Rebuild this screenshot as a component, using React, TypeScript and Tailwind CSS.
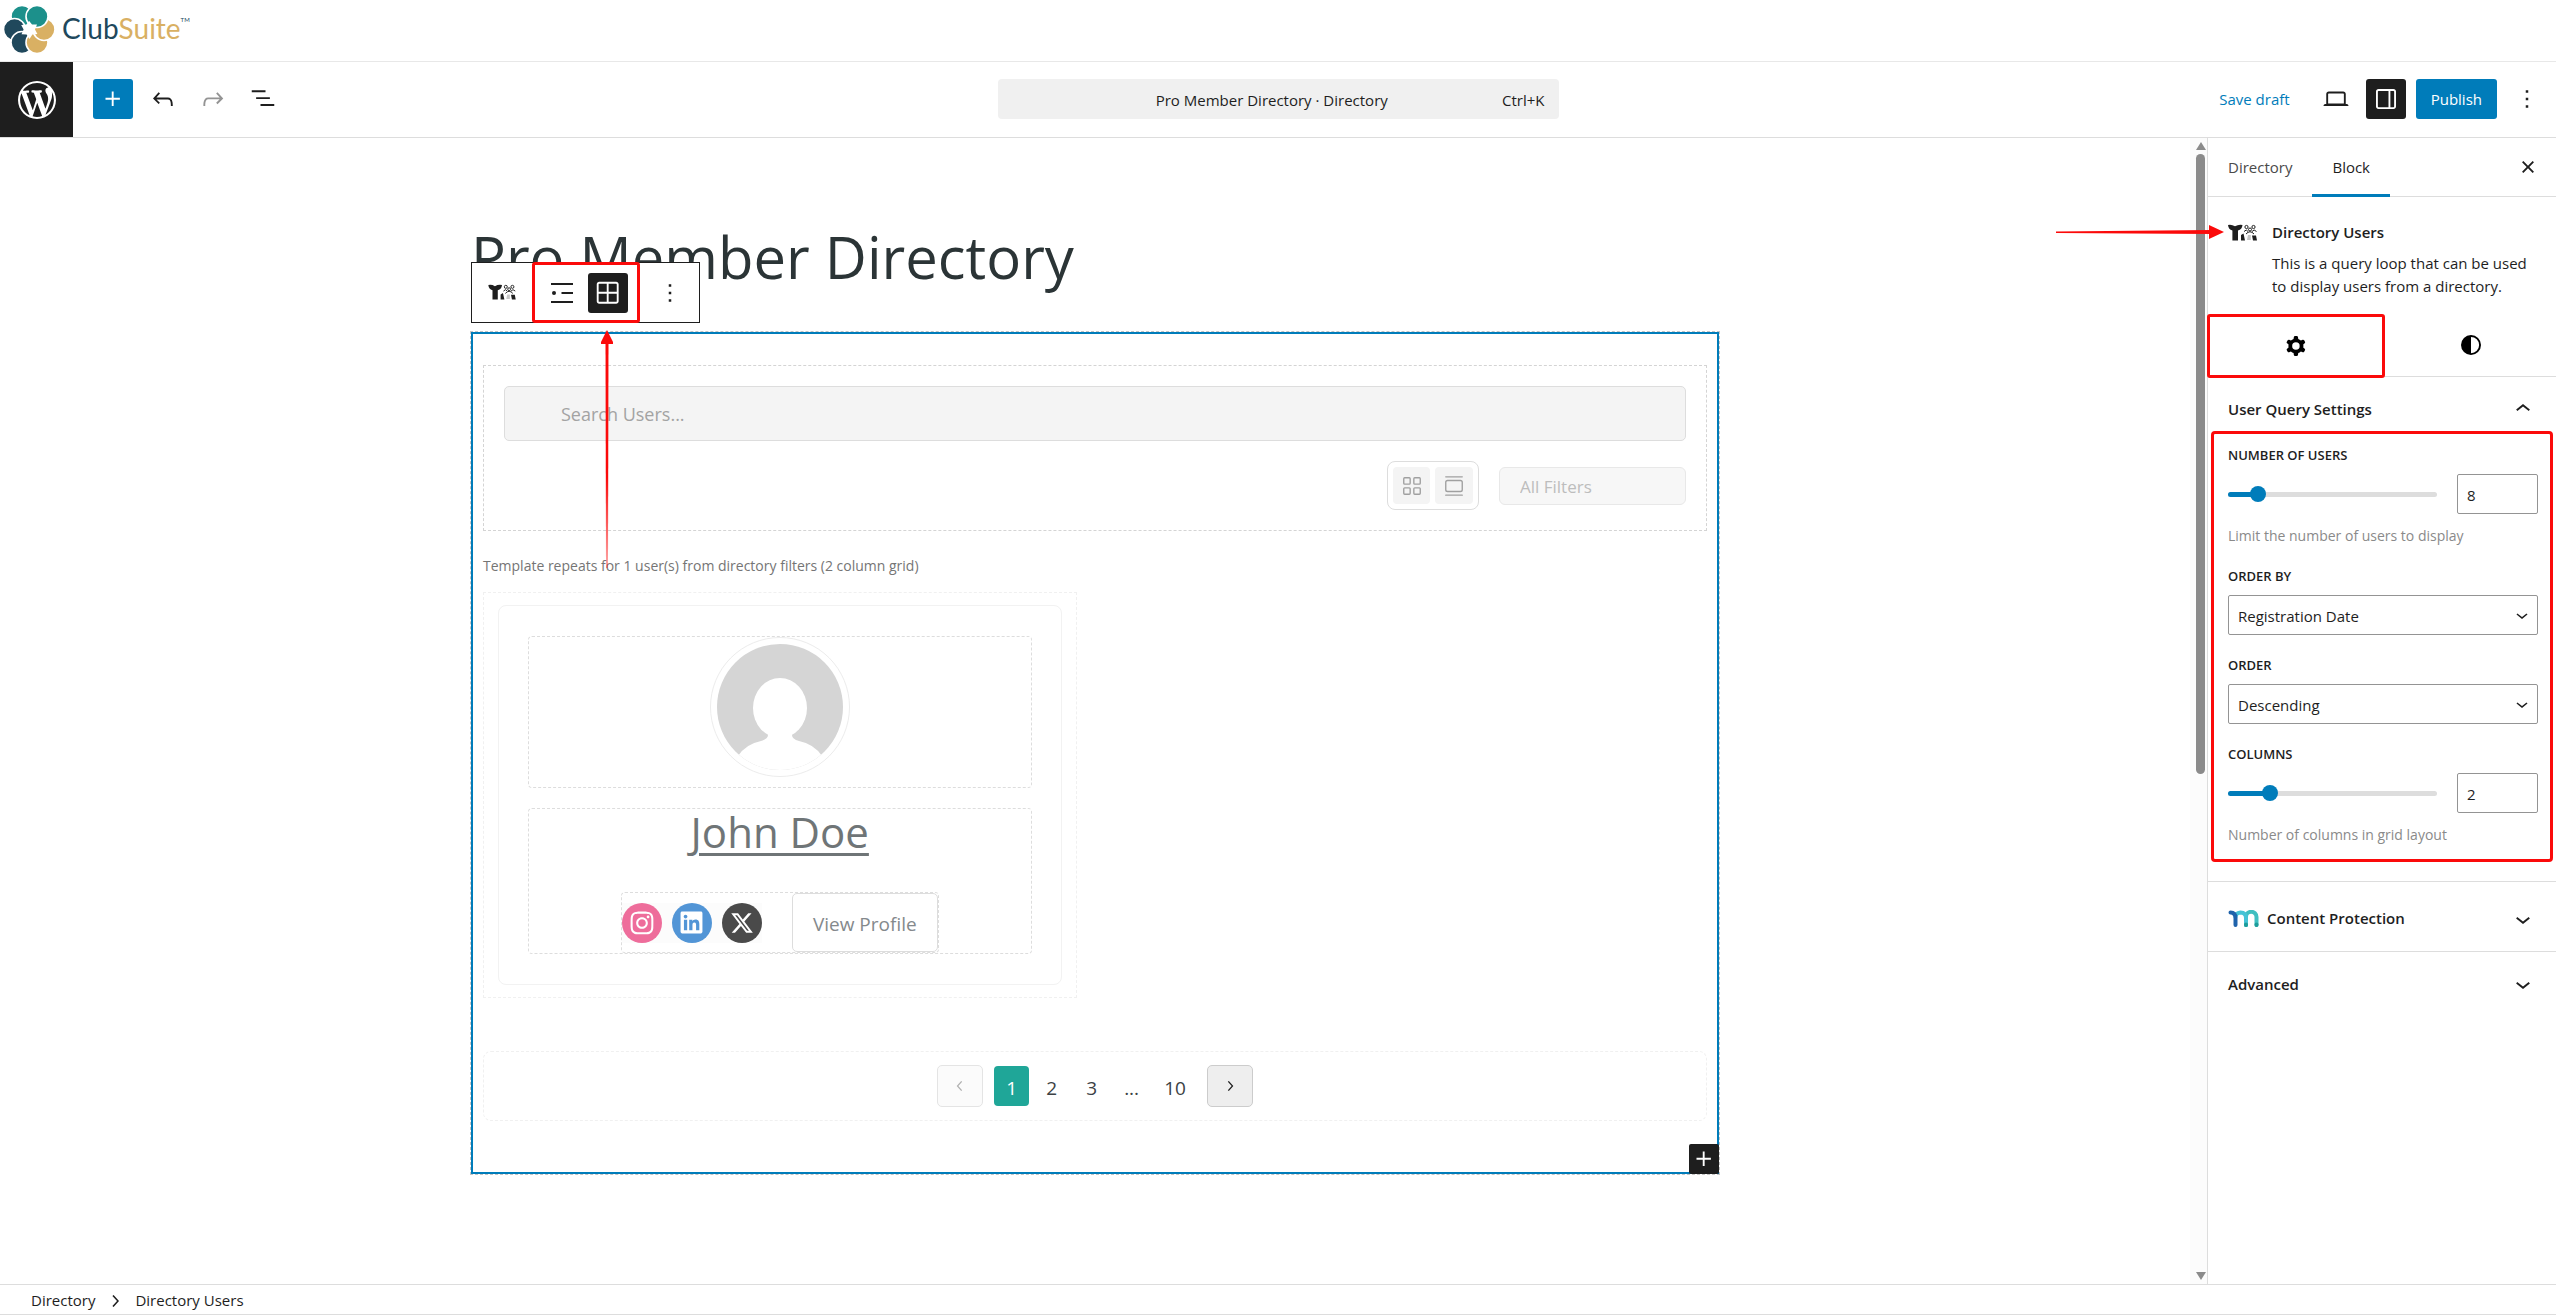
import { useState, type ReactNode } from "react";
import { FaInstagram, FaLinkedin } from "react-icons/fa";
import { FaXTwitter } from "react-icons/fa6";
import { GalleryVertical, LayoutGrid } from "lucide-react";

const paths = {
  plus: "M11 12.5V17.5H12.5V12.5H17.5V11H12.5V6H11V11H6V12.5H11Z",
  undo: "M18.3 11.7c-.6-.6-1.4-.9-2.3-.9H6.7l2.9-3.3-1.1-1-4.5 5L8.5 16l1-1-2.7-2.7H16c.5 0 .9.2 1.3.5 1 1 1 3.4 1 4.5v.3h1.5v-.2c0-1.5 0-4.3-1.5-5.7z",
  redo: "M15.6 6.5l-1.1 1 2.9 3.3H8c-.9 0-1.7.3-2.3.9-1.4 1.5-1.4 4.2-1.4 5.6v.2h1.5v-.3c0-1.1 0-3.5 1-4.5.3-.3.7-.5 1.3-.5h9.2L14.5 15l1.1 1.1 4.6-4.6-4.6-5z",
  outline: "M3 5h11v1.5H3V5Zm3.5 5.5h11V12h-11v-1.5ZM21 16H10v1.5h11V16Z",
  laptop: "M20.5 16h-.7V8c0-1.1-.9-2-2-2H6.2c-1.1 0-2 .9-2 2v8h-.7c-.8 0-1.5.7-1.5 1.5h20c0-.8-.7-1.5-1.5-1.5zM5.7 8c0-.3.2-.5.5-.5h11.6c.3 0 .5.2.5.5v7.6H5.7V8z",
  drawer: "M18 4H6c-1.1 0-2 .9-2 2v12c0 1.1.9 2 2 2h12c1.1 0 2-.9 2-2V6c0-1.1-.9-2-2-2zm-4 14.5H6c-.3 0-.5-.2-.5-.5V6c0-.3.2-.5.5-.5h8v13zm4.5-.5c0 .3-.2.5-.5.5h-2.5v-13H18c.3 0 .5.2.5.5v12z",
  more: "M13 19h-2v-2h2v2zm0-6h-2v-2h2v2zm0-6h-2V5h2v2z",
  close: "M12 13.06l3.712 3.713 1.061-1.06L13.061 12l3.712-3.712-1.06-1.06L12 10.938 8.288 7.227l-1.061 1.06L10.939 12l-3.712 3.712 1.06 1.061L12 13.061z",
  cog: "M10.289 4.836A1 1 0 0111.275 4h1.306a1 1 0 01.987.836l.244 1.466c.787.26 1.503.679 2.108 1.218l1.393-.522a1 1 0 011.216.437l.653 1.13a1 1 0 01-.23 1.273l-1.148.944a6.025 6.025 0 010 2.435l1.149.946a1 1 0 01.23 1.272l-.653 1.13a1 1 0 01-1.216.437l-1.394-.522c-.605.54-1.32.958-2.108 1.218l-.244 1.466a1 1 0 01-.987.836h-1.306a1 1 0 01-.986-.836l-.244-1.466a5.995 5.995 0 01-2.108-1.218l-1.394.522a1 1 0 01-1.217-.436l-.653-1.131a1 1 0 01.23-1.272l1.149-.946a6.026 6.026 0 010-2.435l-1.148-.944a1 1 0 01-.23-1.272l.653-1.131a1 1 0 011.217-.437l1.393.522a5.994 5.994 0 012.108-1.218l.244-1.466zM14.929 12a3 3 0 11-6 0 3 3 0 016 0z",
  contrast: "M20 12a8 8 0 1 1-16 0 8 8 0 0 1 16 0Zm-1.5 0a6.5 6.5 0 0 1-6.5 6.5v-13a6.5 6.5 0 0 1 6.5 6.5Z",
  up: "M6.5 12.4L12 8l5.5 4.4-.9 1.2L12 10l-4.5 3.6-1-1.2z",
  down: "M17.5 11.6L12 16l-5.5-4.4.9-1.2L12 14l4.5-3.6 1 1.2z",
  left: "M14.6 7l-1.2-1L8 12l5.4 6 1.2-1-4.6-5z",
  right: "M10.6 6L9.4 7l4.6 5-4.6 5 1.2 1 5.4-6z",
  grid: "m3 5c0-1.10457.89543-2 2-2h13.5c1.1046 0 2 .89543 2 2v13.5c0 1.1046-.8954 2-2 2h-13.5c-1.10457 0-2-.8954-2-2zm2-.5h6v6.5h-6.5v-6c0-.27614.22386-.5.5-.5zm-.5 8v6c0 .2761.22386.5.5.5h6v-6.5zm8 0v6.5h6c.2761 0 .5-.2239.5-.5v-6zm0-8v6.5h6.5v-6c0-.27614-.2239-.5-.5-.5z",
};

function Icon({ name, className = "size-[30px]" }: { name: keyof typeof paths; className?: string }) {
  return (
    <svg viewBox="0 0 24 24" fill="currentColor" className={`shrink-0 ${className}`} aria-hidden="true">
      <path fillRule="evenodd" clipRule="evenodd" d={paths[name]} />
    </svg>
  );
}

function WordPressLogo() {
  return (
    <svg viewBox="0 0 20 20" fill="currentColor" className="size-[38px]" aria-hidden="true">
      <path d="M20 10c0-5.51-4.49-10-10-10C4.48 0 0 4.49 0 10c0 5.52 4.48 10 10 10 5.51 0 10-4.48 10-10zM7.78 15.37L4.37 6.22c.55-.02 1.17-.08 1.17-.08.5-.06.44-1.13-.06-1.11 0 0-1.45.11-2.37.11-.18 0-.37 0-.58-.01C4.12 2.69 6.87 1.11 10 1.11c2.33 0 4.45.87 6.05 2.34-.68-.11-1.65.39-1.65 1.58 0 .74.45 1.36.9 2.1.35.61.55 1.36.55 2.46 0 1.49-1.4 5-1.4 5l-3.03-8.37c.54-.02.82-.17.82-.17.5-.05.44-1.25-.06-1.22 0 0-1.44.12-2.38.12-.87 0-2.33-.12-2.33-.12-.5-.03-.56 1.2-.06 1.22l.92.08 1.26 3.41zM17.41 10c.24-.64.74-1.87.43-4.25.7 1.29 1.05 2.71 1.05 4.25 0 3.29-1.73 6.24-4.4 7.78.97-2.59 1.94-5.2 2.92-7.78zM6.1 18.09C3.12 16.65 1.11 13.53 1.11 10c0-1.3.23-2.48.72-3.59C3.25 10.3 4.67 14.2 6.1 18.09zm4.03-6.63l2.58 6.98c-.86.29-1.76.45-2.71.45-.79 0-1.57-.11-2.29-.33.81-2.38 1.62-4.74 2.42-7.1z" />
    </svg>
  );
}

function ClubLogo() {
  return (
    <svg viewBox="0 0 58 58" className="size-[58px]" aria-hidden="true">
      <g stroke="#fff" strokeWidth="1.6">
        <circle cx="22" cy="16.5" r="11" fill="#1c908b" />
        <circle cx="14.5" cy="29.5" r="11" fill="#20485c" />
        <circle cx="22" cy="42.5" r="11" fill="#20485c" />
        <circle cx="37" cy="42.5" r="11" fill="#d9b063" />
        <circle cx="44" cy="29.5" r="11" fill="#d9b063" />
        <circle cx="37" cy="16.5" r="11" fill="#1c908b" />
      </g>
      <path d="M29.2 21 32 24.6 37 24.6 35 29.5 37.4 34 32.4 34.6 29.5 39 26.6 34.6 21.5 34.2 23.6 29.5 21.2 25 26.4 24.6Z" fill="#fff" />
    </svg>
  );
}

function DirectoryGlyph({ className }: { className: string }) {
  return (
    <svg viewBox="0 0 30 18" className={className} fill="#1e1e1e" aria-hidden="true">
      <path d="M0 1Q3.500 .2 7 2.300Q10.500.2 14.500 1Q14 5.500 10 6.500V16.500H4.400V6.500Q.5 5.500 0 1Z" />
      <path d="M15.500 9.500 13 11V16.500H17ZM24 11.500H28L29 16.500H25Z" />
      <path d="M20 11h2.800v5H19Z" opacity=".25" />
      <g fill="none" stroke="#1e1e1e" strokeWidth="1">
        <circle cx="18.500" cy="3" r="1.600" />
        <circle cx="25.500" cy="3" r="1.600" />
        <circle cx="22" cy="5.500" r="1.500" />
        <path d="M16 7.500q2.500-3 4 0M24 7.500q2-3 4.500 0M18 10q4-4.500 8 0" />
      </g>
    </svg>
  );
}

function MemberGlyph() {
  return (
    <svg viewBox="0 0 31 18" className="h-[18px] w-[31px]" fill="none" strokeLinecap="round" strokeWidth="4" aria-hidden="true">
      <path d="M18 15V7a5 5 0 0 1 10.500 0V15" stroke="#3fbfc0" />
      <path d="M7.500 7q0-4 5-4.500Q18 2.500 18 8V15" stroke="#45c3d6" />
      <path d="M2.500 2.500Q7.500 2.500 7.500 8V15" stroke="#1f63ab" />
      <path d="M18 14.500V15M28.500 14.500V15" stroke="#1f9c9a" />
    </svg>
  );
}

function IconButton({ label, className = "", children }: { label: string; className?: string; children: ReactNode }) {
  return (
    <button type="button" aria-label={label} className={`flex size-10 shrink-0 items-center justify-center rounded-[3px] ${className}`}>
      {children}
    </button>
  );
}

function RangeField({ id, label, help, start, max }: { id: string; label: string; help: string; start: number; max: number }) {
  const [value, setValue] = useState(start);
  return (
    <div>
      <label htmlFor={id} className="block text-[13px] leading-5 font-semibold uppercase">{label}</label>
      <div className="mt-[9px] flex items-center gap-5">
        <div className="relative h-[5px] flex-1 rounded-full bg-[#ddd]">
          <div className="h-full rounded-full bg-[#007cba]" style={{ width: `${((value - 1) / (max - 1)) * 100}%` }} />
          <input
            id={id}
            type="range"
            min={1}
            max={max}
            value={value}
            onChange={(e) => setValue(Number(e.target.value))}
            className="absolute -inset-x-2 inset-y-0 appearance-none bg-transparent [&::-webkit-slider-thumb]:size-4 [&::-webkit-slider-thumb]:appearance-none [&::-webkit-slider-thumb]:rounded-full [&::-webkit-slider-thumb]:bg-[#007cba]"
          />
        </div>
        <input
          type="text"
          inputMode="numeric"
          aria-label={`${label} value`}
          value={value}
          onChange={(e) => setValue(Number(e.target.value) || 1)}
          className="h-10 w-[81px] rounded-[2px] border border-[#949494] px-[9px] pt-0.5 text-[15px]"
        />
      </div>
      <p className="mt-3 text-[14px] leading-5 text-[#8a8a8a]">{help}</p>
    </div>
  );
}

function SelectField({ id, label, options }: { id: string; label: string; options: string[] }) {
  return (
    <div>
      <label htmlFor={id} className="block text-[13px] leading-5 font-semibold uppercase">{label}</label>
      <div className="relative mt-[9px]">
        <select id={id} className="h-10 w-full appearance-none rounded-[2px] border border-[#949494] bg-white px-[9px] pt-0.5 text-[15px]">
          {options.map((o) => <option key={o}>{o}</option>)}
        </select>
        <Icon name="down" className="pointer-events-none absolute top-2 right-1 size-6" />
      </div>
    </div>
  );
}

function TopBar() {
  return (
    <header className="flex h-[76px] shrink-0 border-b border-[#ddd]">
      <a href="#dashboard" aria-label="View posts" className="flex w-[73px] items-center justify-center bg-[#1e1e1e] text-white">
        <WordPressLogo />
      </a>
      <div className="grid flex-1 grid-cols-[1fr_auto_1fr] items-center pr-[9px] pb-0.5 pl-5">
        <div className="flex gap-2.5">
          <IconButton label="Block inserter" className="bg-[#007cba] text-white"><Icon name="plus" /></IconButton>
          <IconButton label="Undo"><Icon name="undo" /></IconButton>
          <IconButton label="Redo" className="text-[#949494]"><Icon name="redo" /></IconButton>
          <IconButton label="Document overview"><Icon name="outline" /></IconButton>
        </div>
        <button type="button" className="mr-[84px] flex h-10 w-[561px] items-center rounded-[4px] bg-[#f0f0f0] pt-1 pr-3.5 pl-11 text-[15px]">
          <span className="flex-1">Pro Member Directory · Directory</span>
          <span>Ctrl+K</span>
        </button>
        <div className="flex items-center justify-end gap-2.5">
          <button type="button" className="mr-4 pt-0.5 text-[15px] text-[#007cba]">Save draft</button>
          <IconButton label="View"><Icon name="laptop" /></IconButton>
          <IconButton label="Settings" className="bg-[#1e1e1e] text-white"><Icon name="drawer" /></IconButton>
          <button type="button" className="h-10 rounded-[3px] bg-[#007cba] px-[15px] pt-0.5 text-[15px] text-white">Publish</button>
          <IconButton label="Options"><Icon name="more" /></IconButton>
        </div>
      </div>
    </header>
  );
}

function BlockToolbar() {
  return (
    <div className="absolute -top-[72px] -left-0.5 flex h-[61px] w-[229px] items-center border border-[#1e1e1e] bg-white">
      <button type="button" aria-label="Directory Users" className="flex h-full w-[60px] items-center justify-center">
        <DirectoryGlyph className="h-[17px] w-[29px]" />
      </button>
      <div className="flex h-[61px] w-[108px] items-center gap-1.5 rounded-[3px] border-[3px] border-[#fb0a0a] pl-[7px]">
        <IconButton label="List view">
          <svg viewBox="0 0 24 24" className="size-6" stroke="currentColor" strokeWidth="2" aria-hidden="true">
            <path d="M1 3h22M11.500 12h11.500M1 21h22" />
            <circle cx="4" cy="12" r="2" fill="currentColor" stroke="none" />
          </svg>
        </IconButton>
        <IconButton label="Grid view" className="bg-[#1e1e1e] text-white"><Icon name="grid" /></IconButton>
      </div>
      <button type="button" aria-label="Options" className="flex h-full flex-1 items-center justify-center"><Icon name="more" /></button>
    </div>
  );
}

function UserCard() {
  return (
    <article className="border border-dashed border-[#f0f0f0] px-3.5 py-3">
      <div className="flex flex-col gap-5 rounded-lg border border-[#f2f2f2] px-[29px] py-[30px]">
        <div className="flex justify-center rounded-[4px] border border-dashed border-[#ddd] pb-2.5">
          <svg viewBox="0 0 140 140" className="size-[140px]" role="img" aria-label="User avatar">
            <defs>
              <clipPath id="avatar"><circle cx="70" cy="70" r="63" /></clipPath>
            </defs>
            <circle cx="70" cy="70" r="69.500" fill="#fff" stroke="#ececec" />
            <g clipPath="url(#avatar)">
              <rect width="140" height="140" fill="#d5d5d5" />
              <ellipse cx="70" cy="71" rx="27" ry="30" fill="#fff" />
              <path d="M58 88V98Q58 102 51 104Q36 107 28 119V140H112V119Q104 107 89 104Q82 102 82 98V88Z" fill="#fff" />
            </g>
          </svg>
        </div>
        <div className="flex flex-col items-center rounded-[4px] border border-dashed border-[#ddd]">
          <a href="#john-doe" className="text-[42px] leading-[46px] text-[#6f7577] underline decoration-[3px] underline-offset-[5px]">John Doe</a>
          <div className="mt-[37px] flex items-center rounded-[4px] border border-dashed border-[#ddd]">
            <div className="mr-[30px] flex gap-2.5 bg-[#fcfcfc]">
              <a href="#instagram" aria-label="Instagram" className="flex size-10 items-center justify-center rounded-full bg-[#ee6d9b] text-white"><FaInstagram className="size-[26px]" /></a>
              <a href="#linkedin" aria-label="LinkedIn" className="flex size-10 items-center justify-center rounded-full bg-[#5295d6] text-white"><FaLinkedin className="size-[25px]" /></a>
              <a href="#x" aria-label="X" className="flex size-10 items-center justify-center rounded-full bg-[#4a4a4a] text-white"><FaXTwitter className="size-6" /></a>
            </div>
            <button type="button" className="h-[59px] w-[146px] rounded-[5px] border border-[#ddd] pt-1 text-[19px] text-[#84898c]">View Profile</button>
          </div>
        </div>
      </div>
    </article>
  );
}

function Pagination() {
  const cell = "flex h-10 min-w-[35px] items-center justify-center rounded-[4px]";
  return (
    <nav aria-label="Pagination" className="mt-[53px] flex items-center justify-center gap-[5px] rounded-[8px] border border-dashed border-[#f0f0f0] py-[13px] text-[19px] text-[#3c4245]">
      <button type="button" aria-label="Previous page" className="mr-1.5 flex h-[42px] w-[46px] items-center justify-center rounded-[5px] border border-[#e4e4e4] bg-[#fbfbfb] text-[#b0b0b0]">
        <Icon name="left" className="size-5" />
      </button>
      <button type="button" aria-current="page" className={`${cell} bg-[#1fa698] pt-1 text-white`}>1</button>
      <button type="button" className={`${cell} pt-1`}>2</button>
      <button type="button" className={`${cell} pt-1`}>3</button>
      <span className={`${cell} pt-1`}>...</span>
      <button type="button" className={`${cell} px-2.5 pt-1`}>10</button>
      <button type="button" aria-label="Next page" className="ml-1.5 flex h-[42px] w-[46px] items-center justify-center rounded-[5px] border border-[#ccc] bg-[#eee] text-[#1e1e1e]">
        <Icon name="right" className="size-5" />
      </button>
    </nav>
  );
}

function Canvas() {
  return (
    <main className="min-w-0 flex-1 pt-[79px]">
      <div className="mx-auto max-w-[1248px]">
        <h1 className="text-[58px] leading-[80px] text-[#2b3436]">Pro Member Directory</h1>
        <section className="relative mt-[35px] border-2 border-[#007cba] px-2.5 pt-[31px] pb-[51px] outline-1 outline-dashed outline-[#c4c4c4]">
          <BlockToolbar />
          <div className="border border-dashed border-[#d4d4d4] p-5">
            <input
              type="search"
              aria-label="Search users"
              placeholder="Search Users..."
              className="block h-[55px] w-full rounded-[5px] border border-[#ddd] bg-[#f4f4f4] px-14 text-[18px] placeholder:text-[#a3a3a3]"
            />
            <div className="mt-5 flex items-center justify-end gap-5">
              <div className="flex gap-[5px] rounded-[8px] border border-[#ddd] p-[5px] text-[#a0a0a0]">
                <button type="button" aria-label="Grid layout" className="flex size-[37px] items-center justify-center rounded-[4px] bg-[#f4f4f4]"><LayoutGrid className="size-[22px]" strokeWidth={1.5} /></button>
                <button type="button" aria-label="List layout" className="flex h-[37px] w-[38px] items-center justify-center rounded-[4px] bg-[#f4f4f4]"><GalleryVertical className="size-[22px]" strokeWidth={1.5} /></button>
              </div>
              <input
                type="text"
                aria-label="All filters"
                placeholder="All Filters"
                className="h-[38px] w-[187px] rounded-[6px] border border-[#e8e8e8] bg-[#f7f7f7] px-5 pt-0.5 text-[17px] placeholder:text-[#bdbdbd]"
              />
            </div>
          </div>
          <p className="mt-[25px] text-[14px] leading-5 text-[#757575]">Template repeats for 1 user(s) from directory filters (2 column grid)</p>
          <div className="mt-4 grid grid-cols-2 gap-[37px]">
            <UserCard />
          </div>
          <Pagination />
          <button type="button" aria-label="Add block" className="absolute -right-0.5 -bottom-0.5 flex size-[30px] items-center justify-center rounded-[2px] bg-[#1e1e1e] text-white">
            <Icon name="plus" />
          </button>
          <svg viewBox="0 0 12 238" className="pointer-events-none absolute -top-1 left-32 h-[238px] w-3" aria-hidden="true">
            <defs>
              <linearGradient id="fade-up" x1="0" y1="0" x2="0" y2="1">
                <stop offset=".6" stopColor="#fb0a0a" />
                <stop offset="1" stopColor="#fb0a0a" stopOpacity=".35" />
              </linearGradient>
            </defs>
            <path d="M4.500 10H7.500L7 238H5Z" fill="url(#fade-up)" />
            <path d="M6 0 13 14H-1Z" fill="#fb0a0a" />
          </svg>
        </section>
      </div>
    </main>
  );
}

function ScrollTrack() {
  return (
    <div className="flex w-[17px] flex-col items-center bg-[#fcfcfc] py-1 pl-1 text-[#8b8b8b]" aria-hidden="true">
      <svg viewBox="0 0 10 8" className="h-2 w-[10px]" fill="currentColor"><path d="M5 0 10 8H0Z" /></svg>
      <div className="mt-1 mb-auto h-[620px] w-[9px] rounded-full bg-current" />
      <svg viewBox="0 0 10 8" className="h-2 w-[10px]" fill="currentColor"><path d="M5 8 10 0H0Z" /></svg>
    </div>
  );
}

function Sidebar() {
  return (
    <aside className="relative w-[349px] shrink-0 border-l border-[#ddd] text-[15px]">
      <svg viewBox="0 0 170 14" className="pointer-events-none absolute top-[87px] -left-[152px] h-[14px] w-[170px]" aria-hidden="true">
        <path d="M0 6.500 155 5V9L0 8Z" fill="#fb0a0a" />
        <path d="M153 0 168 7 153 14Z" fill="#fb0a0a" />
      </svg>
      <div className="flex h-[59px] border-b border-[#ddd]">
        <button type="button" className="px-5 text-[#4a4a4a]">Directory</button>
        <button type="button" className="-mb-px border-b-[3px] border-[#007cba] px-5 pt-[3px]">Block</button>
        <IconButton label="Close settings" className="mt-[9px] mr-2 ml-auto"><Icon name="close" /></IconButton>
      </div>
      <div className="flex gap-3.5 pt-6 pr-3.5 pb-4 pl-5">
        <DirectoryGlyph className="mt-[3px] h-[18px] w-[30px] shrink-0" />
        <div className="leading-[23px]">
          <h2 className="font-semibold">Directory Users</h2>
          <p className="mt-2">This is a query loop that can be used to display users from a directory.</p>
        </div>
      </div>
      <div className="flex h-[63px] border-b border-[#ddd] text-black">
        <button type="button" aria-label="Settings" className="-ml-px flex h-16 w-[178px] items-center justify-center rounded-[3px] border-[3px] border-[#fb0a0a]"><Icon name="cog" /></button>
        <button type="button" aria-label="Styles" className="flex flex-1 items-center justify-center"><Icon name="contrast" /></button>
      </div>
      <section className="relative border-b border-[#ddd] pr-[18px] pb-9 pl-5">
        <button type="button" className="mb-1 flex h-16 w-full items-center justify-between font-semibold">
          User Query Settings
          <Icon name="up" />
        </button>
        <div className="flex flex-col gap-5">
          <RangeField id="users" label="Number of users" help="Limit the number of users to display" start={8} max={50} />
          <SelectField id="order-by" label="Order by" options={["Registration Date", "Display Name"]} />
          <SelectField id="order" label="Order" options={["Descending", "Ascending"]} />
          <RangeField id="columns" label="Columns" help="Number of columns in grid layout" start={2} max={6} />
        </div>
        <div className="pointer-events-none absolute inset-x-[3px] top-[54px] bottom-[19px] rounded-[4px] border-[3px] border-[#fb0a0a]" />
      </section>
      <button type="button" className="flex h-[70px] w-full items-center gap-2 border-b border-[#ddd] pt-1 pr-[18px] pl-5 font-semibold">
        <MemberGlyph />
        Content Protection
        <Icon name="down" className="ml-auto size-[30px]" />
      </button>
      <button type="button" className="flex h-16 w-full items-center justify-between pr-[18px] pl-5 font-semibold">
        Advanced
        <Icon name="down" />
      </button>
    </aside>
  );
}

export default function App() {
  return (
    <div className="flex min-h-screen flex-col bg-white font-['Open_Sans','Noto_Sans',sans-serif] text-[#1e1e1e]">
      <div className="flex h-[62px] shrink-0 items-start border-b border-[#e8e8e8]">
        <ClubLogo />
        <p className="flex pt-2 pl-1 font-['Lato',sans-serif] text-[28px] leading-10 text-[#20485c]">
          Club<span className="text-[#d9b063]">Suite</span>
          <span className="pt-1 text-[6px] leading-4">TM</span>
        </p>
      </div>
      <TopBar />
      <div className="flex flex-1">
        <Canvas />
        <ScrollTrack />
        <Sidebar />
      </div>
      <footer className="flex h-[31px] shrink-0 items-center border-y border-[#ddd] pt-0.5 pl-[31px] text-[15px]">
        <a href="#directory">Directory</a>
        <Icon name="right" className="mx-2 size-6" />
        <span>Directory Users</span>
      </footer>
    </div>
  );
}
